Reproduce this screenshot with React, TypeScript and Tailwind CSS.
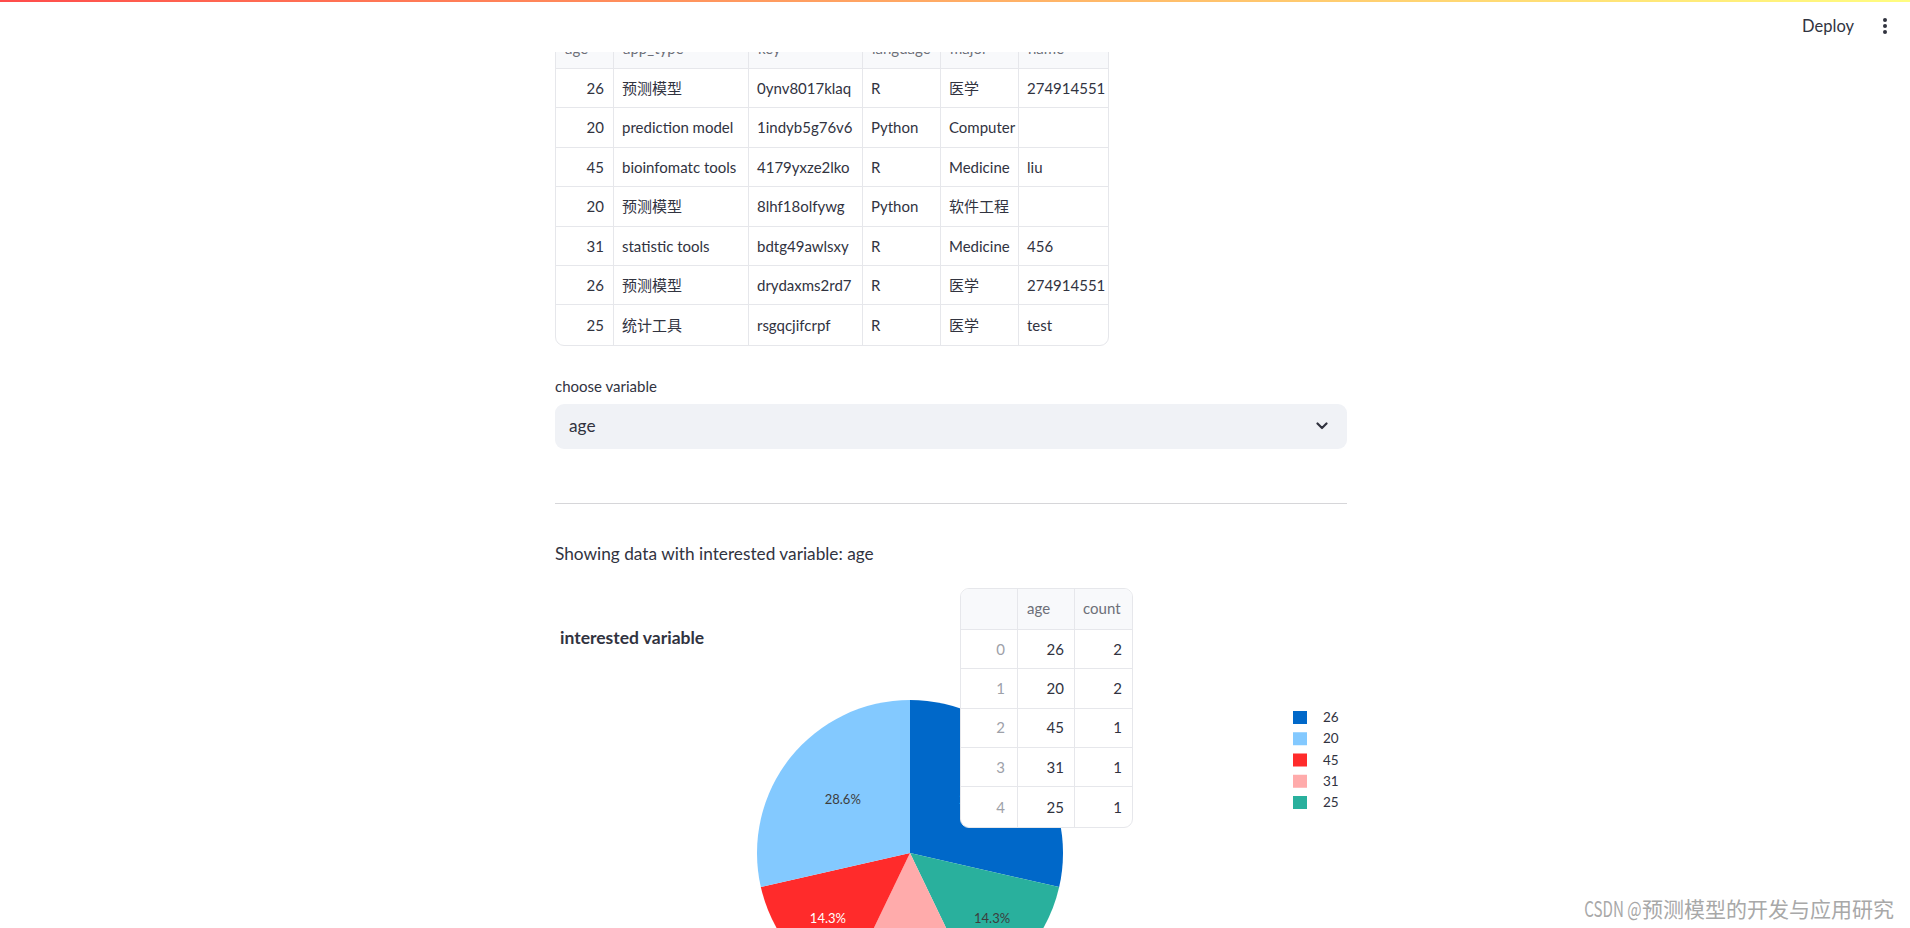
import React from 'react'

const COLS = ['age', 'app_type', 'key', 'language', 'major', 'name']

const ROWS: (string | number)[][] = [
  [26, '预测模型', '0ynv8017klaq', 'R', '医学', '274914551'],
  [20, 'prediction model', '1indyb5g76v6', 'Python', 'Computer', ''],
  [45, 'bioinfomatc tools', '4179yxze2lko', 'R', 'Medicine', 'liu'],
  [20, '预测模型', '8lhf18olfywg', 'Python', '软件工程', ''],
  [31, 'statistic tools', 'bdtg49awlsxy', 'R', 'Medicine', '456'],
  [26, '预测模型', 'drydaxms2rd7', 'R', '医学', '274914551'],
  [25, '统计工具', 'rsgqcjifcrpf', 'R', '医学', 'test'],
]

const COUNTS = [
  [0, 26, 2],
  [1, 20, 2],
  [2, 45, 1],
  [3, 31, 1],
  [4, 25, 1],
]

// slices clockwise from 12 o'clock, as in the chart
const SLICES = [
  { label: '26', color: '#0068c9', from: 0, to: 2, text: '28.6%', txt: '#ffffff', r: 86 },
  { label: '25', color: '#29b09d', from: 2, to: 3, text: '14.3%', txt: '#3d3d3d', r: 105 },
  { label: '31', color: '#ffabab', from: 3, to: 4, text: '14.3%', txt: '#3d3d3d', r: 105 },
  { label: '45', color: '#ff2b2b', from: 4, to: 5, text: '14.3%', txt: '#ffffff', r: 105 },
  { label: '20', color: '#83c9ff', from: 5, to: 7, text: '28.6%', txt: '#3d3d3d', r: 86 },
]

const LEGEND = [
  { label: '26', color: '#0068c9' },
  { label: '20', color: '#83c9ff' },
  { label: '45', color: '#ff2b2b' },
  { label: '31', color: '#ffabab' },
  { label: '25', color: '#29b09d' },
]

const CX = 355
const CY = 265
const R = 153

const pt = (deg: number, r: number) => {
  const a = (deg * Math.PI) / 180
  return [CX + r * Math.sin(a), CY - r * Math.cos(a)]
}

function slicePath(a0: number, a1: number) {
  const [x0, y0] = pt(a0, R)
  const [x1, y1] = pt(a1, R)
  const large = a1 - a0 > 180 ? 1 : 0
  return `M${CX},${CY} L${x0},${y0} A${R},${R} 0 ${large} 1 ${x1},${y1} Z`
}

function PieChart() {
  const font = "Lato, 'Noto Sans CJK SC', sans-serif"
  return (
    <svg width={794} height={450} className="overflow-visible">
      <text x={5} y={56} fontFamily={font} fontSize={17.5} fontWeight={700} fill="#31333f">
        interested variable
      </text>
      {SLICES.map(s => {
        const a0 = (s.from / 7) * 360
        const a1 = (s.to / 7) * 360
        return <path key={s.label} d={slicePath(a0, a1)} fill={s.color} />
      })}
      {SLICES.map(s => {
        const mid = ((s.from + s.to) / 14) * 360
        const [x, y] = pt(mid, s.r)
        return (
          <text key={s.label} x={x} y={y + 5} textAnchor="middle" fontFamily={font} fontSize={13} fill={s.txt}>
            {s.text}
          </text>
        )
      })}
      {LEGEND.map((l, i) => (
        <g key={l.label}>
          <rect x={738} y={123 + i * 21.25} width={14} height={13} fill={l.color} />
          <text x={768} y={134 + i * 21.25} fontFamily={font} fontSize={13.5} fill="#31333f">
            {l.label}
          </text>
        </g>
      ))}
    </svg>
  )
}

function DataTable() {
  const widths = ['w-[58px]', 'w-[135px]', 'w-[114px]', 'w-[78px]', 'w-[78px]', 'w-[89px]']
  return (
    <div className="inline-block border border-[#e6e7eb] rounded-[9px] overflow-hidden text-[15px]">
      <div className="flex h-[41px] bg-[#f8f9fb] border-b border-[#e6e7eb]">
        {COLS.map((c, i) => (
          <div key={c}
            className={`${widths[i]} flex items-center px-[9px] text-[#6d6f78] ${i < 5 ? 'border-r border-[#e6e7eb]' : ''}`}>
            {c}
          </div>
        ))}
      </div>
      {ROWS.map((row, r) => (
        <div key={r} className={`flex h-[39.4px] ${r < ROWS.length - 1 ? 'border-b border-[#e6e7eb]' : ''}`}>
          {row.map((v, i) => (
            <div key={i}
              className={`${widths[i]} flex items-center pl-[8px] pr-[9px] overflow-hidden whitespace-nowrap ${i === 0 ? 'justify-end' : ''} ${i < 5 ? 'border-r border-[#e6e7eb]' : ''}`}>
              {v}
            </div>
          ))}
        </div>
      ))}
    </div>
  )
}

function CountTable() {
  return (
    <div className="inline-block border border-[#e6e7eb] rounded-[9px] overflow-hidden bg-white text-[15px]">
      <div className="flex h-[41px] bg-[#f8f9fb] border-b border-[#e6e7eb] text-[#6d6f78]">
        <div className="w-[57px] border-r border-[#e6e7eb]" />
        <div className="w-[57px] flex items-center px-[9px] border-r border-[#e6e7eb]">age</div>
        <div className="w-[57px] flex items-center px-[8px]">count</div>
      </div>
      {COUNTS.map((row, r) => (
        <div key={r} className={`flex h-[39.4px] ${r < COUNTS.length - 1 ? 'border-b border-[#e6e7eb]' : ''}`}>
          <div className="w-[57px] flex items-center justify-end px-[12px] text-[#9ea1a9] border-r border-[#e6e7eb]">{row[0]}</div>
          <div className="w-[57px] flex items-center justify-end px-[10px] border-r border-[#e6e7eb]">{row[1]}</div>
          <div className="w-[57px] flex items-center justify-end px-[10px]">{row[2]}</div>
        </div>
      ))}
    </div>
  )
}

export default function App() {
  return (
    <div className="relative h-[928px] overflow-hidden bg-white text-[#31333f] font-['Lato','Noto_Sans_CJK_SC',sans-serif]">
      <header className="fixed top-0 inset-x-0 h-[52px] bg-white z-20">
        <div className="h-[2px] bg-linear-to-r from-[#ff4b4b] to-[#fffd80]" />
        <div className="flex items-center justify-end h-[48px] pr-[13px] gap-[19px]">
          <span className="text-[16.5px]">Deploy</span>
          <div className="w-[24px] h-[24px] flex flex-col items-center justify-center gap-[2.5px]">
            <span className="w-[3.5px] h-[3.5px] rounded-full bg-[#31333f]" />
            <span className="w-[3.5px] h-[3.5px] rounded-full bg-[#31333f]" />
            <span className="w-[3.5px] h-[3.5px] rounded-full bg-[#31333f]" />
          </div>
        </div>
      </header>

      <main className="pr-2">
        <div className="mx-auto w-[792px] pt-[27px]">
          <DataTable />

          <div className="mt-[24px] text-[15px] leading-[20px]">choose variable</div>
          <div className="mt-[8px] h-[45px] rounded-[9px] bg-[#f0f2f6] flex items-center justify-between pl-[14px] pr-[19px]">
            <span className="text-[17.25px]">age</span>
            <svg width="12" height="8" viewBox="0 0 12 8">
              <polyline points="1.5,1.5 6,6 10.5,1.5" fill="none" stroke="#31333f" strokeWidth="2.2" strokeLinecap="round" strokeLinejoin="round" />
            </svg>
          </div>

          <div className="mt-[54px] h-px bg-[#d6d6d9]" />

          <div className="mt-[36px] text-[17.25px] leading-[27px]">Showing data with interested variable: age</div>

          <div className="mt-[21px] flex gap-[18px]">
            <div className="w-[387px] shrink-0">
              <PieChart />
            </div>
            <div className="relative z-10">
              <CountTable />
            </div>
          </div>
        </div>
      </main>

      <div className="absolute right-[16px] bottom-[6px] text-[21px] leading-[28px] text-[#a8a8a8] font-['Noto_Sans_CJK_SC',sans-serif] z-30 whitespace-nowrap">
        <span className="inline-block scale-x-[0.72] origin-right">CSDN @</span>预测模型的开发与应用研究
      </div>
    </div>
  )
}
